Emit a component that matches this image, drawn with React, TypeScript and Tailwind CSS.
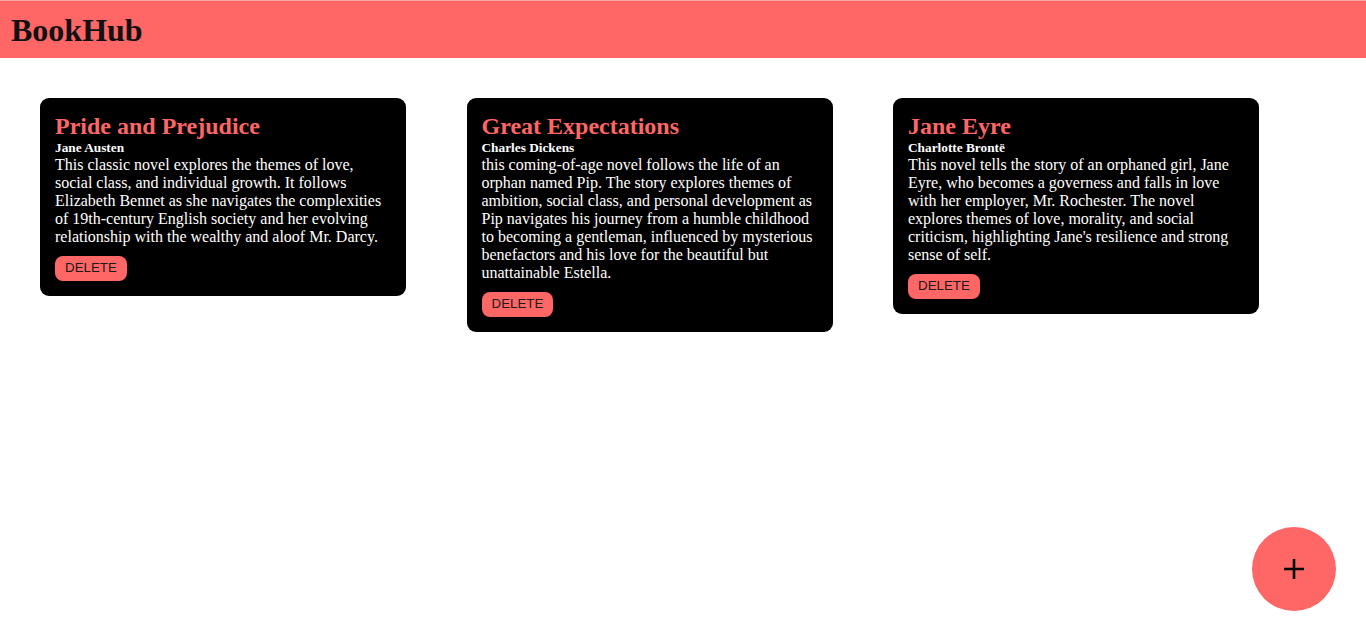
import React from "react";

const books = [
  {
    id: 1,
    title: "Pride and Prejudice",
    author: "Jane Austen",
    description:
      "This classic novel explores the themes of love, social class, and individual growth. It follows Elizabeth Bennet as she navigates the complexities of 19th-century English society and her evolving relationship with the wealthy and aloof Mr. Darcy.",
  },
  {
    id: 2,
    title: "Great Expectations",
    author: "Charles Dickens",
    description:
      "this coming-of-age novel follows the life of an orphan named Pip. The story explores themes of ambition, social class, and personal development as Pip navigates his journey from a humble childhood to becoming a gentleman, influenced by mysterious benefactors and his love for the beautiful but unattainable Estella.",
  },
  {
    id: 3,
    title: "Jane Eyre",
    author: "Charlotte Brontë",
    description:
      "This novel tells the story of an orphaned girl, Jane Eyre, who becomes a governess and falls in love with her employer, Mr. Rochester. The novel explores themes of love, morality, and social criticism, highlighting Jane's resilience and strong sense of self.",
  },
];

function BookCard({ book }: { book: (typeof books)[number] }) {
  return (
    <div className="w-[366px] shrink-0 rounded-[9px] bg-black p-[15px] text-white">
      <h2 className="text-[24px] leading-[26.6px] font-bold text-[#ff6666]">{book.title}</h2>
      <h4 className="text-[13.3px] leading-[16px] font-bold">{book.author}</h4>
      <p className="text-[16px] leading-[18px]">{book.description}</p>
      <button className="mt-[10.4px] flex h-[25px] items-center rounded-[8px] bg-[#ff6666] px-[10px] font-['Liberation_Sans',Arial,sans-serif] text-[13.33px] text-[#1a1a1a]">
        DELETE
      </button>
    </div>
  );
}

export default function App() {
  return (
    <div className="relative min-h-[639px] bg-white font-['Liberation_Serif','Times_New_Roman',serif]">
      <header className="flex h-[58px] items-center border-t border-[#f9a3a3] bg-[#ff6666] px-[11px]">
        <h1 className="text-[32px] font-bold text-[#111]">BookHub</h1>
      </header>

      <main className="flex items-start gap-[60.5px] px-10 pt-10">
        {books.map((book) => (
          <BookCard key={book.id} book={book} />
        ))}
      </main>

      <button className="absolute right-[30px] bottom-[28px] flex h-[84px] w-[84px] items-center justify-center rounded-full bg-[#ff6666] text-black">
        <svg width="22" height="22" viewBox="0 0 22 22">
          <path d="M11 1v20M1 11h20" stroke="currentColor" strokeWidth="2.6" />
        </svg>
      </button>
    </div>
  );
}
